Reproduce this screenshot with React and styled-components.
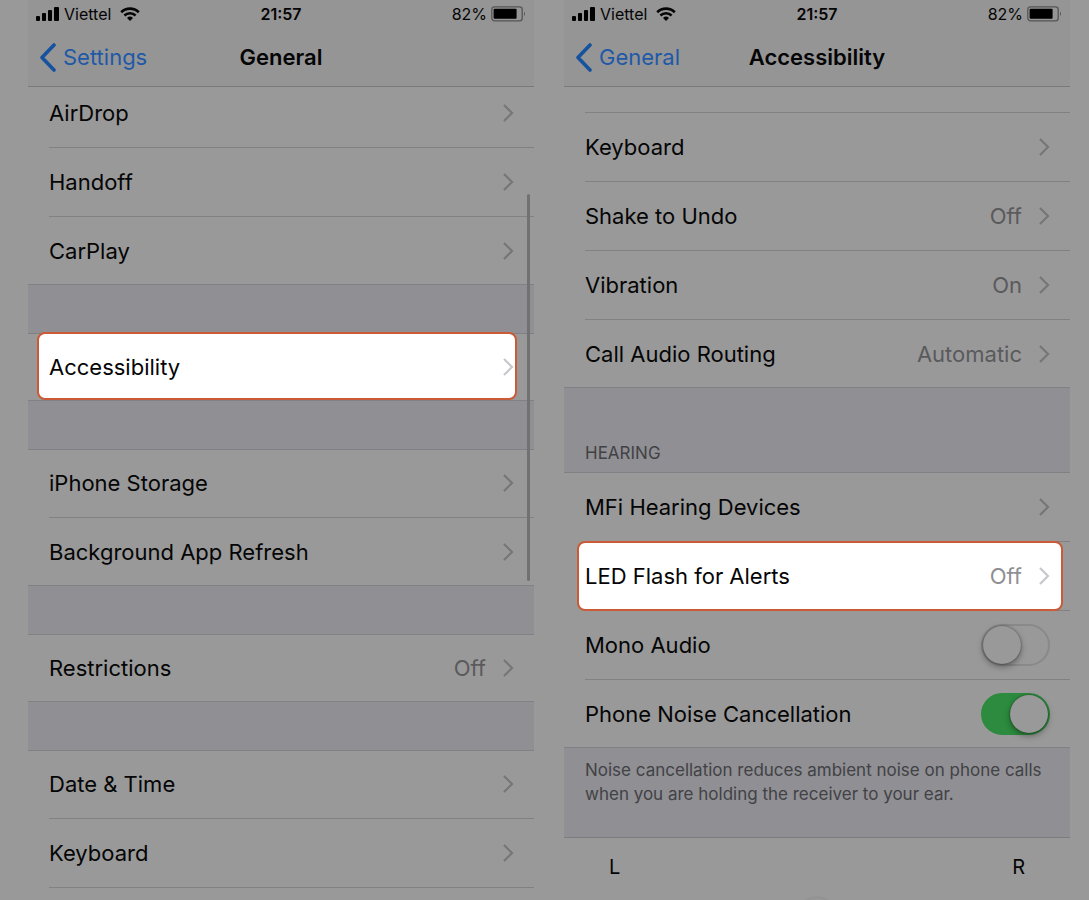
import styled, { createGlobalStyle } from "styled-components";

const App = () => {
  return (
    <>
      <GlobalStyle />
      <Page>
        <GeneralScreen />
        <AccessibilityScreen />
      </Page>
    </>
  );
};

export default App;

const GeneralScreen = () => (
  <Phone>
    <Header title="General" back="Settings" />
    <Content $scrolled>
      <Group>
        <LinkRow label="AirDrop" />
        <LinkRow label="Handoff" />
        <LinkRow label="CarPlay" />
      </Group>
      <Group>
        <LinkRow label="Accessibility" framed="9px 17px" />
      </Group>
      <Group>
        <LinkRow label="iPhone Storage" />
        <LinkRow label="Background App Refresh" />
      </Group>
      <Group>
        <LinkRow label="Restrictions" value="Off" />
      </Group>
      <Group $open>
        <LinkRow label="Date & Time" />
        <LinkRow label="Keyboard" />
      </Group>
    </Content>
    <ScrollBar />
  </Phone>
);

const AccessibilityScreen = () => (
  <Phone>
    <Header title="Accessibility" back="General" />
    <Content>
      <Group>
        <RowEdge />
        <LinkRow label="Keyboard" />
        <LinkRow label="Shake to Undo" value="Off" />
        <LinkRow label="Vibration" value="On" />
        <LinkRow label="Call Audio Routing" value="Automatic" />
      </Group>
      <GroupTitle>HEARING</GroupTitle>
      <Group>
        <LinkRow label="MFi Hearing Devices" />
        <LinkRow label="LED Flash for Alerts" value="Off" framed="13px 7px" />
        <SwitchRow id="mono" label="Mono Audio" />
        <SwitchRow id="noise" label="Phone Noise Cancellation" on />
      </Group>
      <GroupNote>
        Noise cancellation reduces ambient noise on phone calls when you are
        holding the receiver to your ear.
      </GroupNote>
      <Balance>
        <BalanceEnds>
          <span>L</span>
          <span>R</span>
        </BalanceEnds>
        <BalanceSlider type="range" aria-label="Audio balance" />
      </Balance>
    </Content>
  </Phone>
);

const Header = ({ title, back }) => (
  <Top>
    <StatusBar>
      <Carrier>
        <svg width="23" height="14" viewBox="0 0 23 14">
          <rect x="0" y="9" width="4" height="5" rx="1" />
          <rect x="6" y="6" width="4" height="8" rx="1" />
          <rect x="12" y="3" width="4" height="11" rx="1" />
          <rect x="18" y="0" width="5" height="14" rx="1" />
        </svg>
        <span>Viettel</span>
        <WifiIcon width="20" height="14" viewBox="0 0 20 14">
          <path d="M1.2 5.2a12.6 12.6 0 0 1 17.6 0" />
          <path d="M4.4 8.5a8 8 0 0 1 11.2 0" />
          <path d="M7 10.9a4.4 4.4 0 0 1 6 0L10 14z" className="dot" />
        </WifiIcon>
      </Carrier>
      <Clock>21:57</Clock>
      <Power>
        <span>82%</span>
        <svg width="35" height="16" viewBox="0 0 35 16">
          <rect x="0.8" y="0.8" width="30.4" height="14" rx="2.6" fill="none" stroke="#555557" strokeWidth="1.3" />
          <rect x="2.6" y="2.8" width="23" height="10" rx="1" />
          <path d="M33 5.5q2 2.3 0 4.6z" fill="#555557" />
        </svg>
      </Power>
    </StatusBar>
    <NavBar>
      <BackLink href="#back">
        <svg width="17" height="29" viewBox="0 0 17 29">
          <path d="M15 2L3 14.5L15 27" />
        </svg>
        {back}
      </BackLink>
      <Title>{title}</Title>
    </NavBar>
  </Top>
);

const LinkRow = ({ label, value, framed }) => (
  <Row as="a" href="#open" $framed={framed}>
    <Label>{label}</Label>
    {value && <Value>{value}</Value>}
    <Chevron width="12" height="20" viewBox="0 0 12 20">
      <path d="M2 2L10 10L2 18" />
    </Chevron>
  </Row>
);

const SwitchRow = ({ id, label, on }) => (
  <Row>
    <Label as="label" htmlFor={id}>
      {label}
    </Label>
    <Switch id={id} type="checkbox" defaultChecked={on} />
  </Row>
);

const GlobalStyle = createGlobalStyle`
  * {
    box-sizing: border-box;
  }
  body {
    margin: 0;
    background: #999999;
    color: #050505;
    font-family: Inter, "Liberation Sans", sans-serif;
  }
  svg {
    display: block;
    flex-shrink: 0;
  }
`;

const Page = styled.main`
  display: grid;
  grid-template-columns: 1fr 1fr;
  column-gap: 30px;
  height: 100vh;
  padding: 0 19px 0 28px;
  overflow: hidden;
`;

const Phone = styled.section`
  position: relative;
  min-width: 0;
`;

const Top = styled.header`
  position: relative;
  z-index: 2;
  height: 87px;
  background: #959596;
  border-bottom: 1px solid #79797b;
`;

const StatusBar = styled.div`
  display: grid;
  grid-template-columns: 1fr auto 1fr;
  align-items: center;
  height: 28px;
  padding: 0 8px;
  font-size: 16px;
`;

const Carrier = styled.div`
  display: flex;
  align-items: center;
  gap: 5px;
`;

const WifiIcon = styled.svg`
  margin-left: 4px;
  fill: none;
  stroke: #050505;
  stroke-width: 2.6;
  .dot {
    fill: #050505;
    stroke: none;
  }
`;

const Clock = styled.time`
  font-weight: 600;
`;

const Power = styled.div`
  display: flex;
  align-items: center;
  justify-content: flex-end;
  gap: 4px;
`;

const NavBar = styled.nav`
  display: grid;
  grid-template-columns: 1fr auto 1fr;
  align-items: center;
  height: 58px;
  padding: 0 11px;
  font-size: 22px;
`;

const BackLink = styled.a`
  display: flex;
  align-items: center;
  gap: 7px;
  color: #1f59a6;
  text-decoration: none;
  path {
    fill: none;
    stroke: #17529f;
    stroke-width: 3.6;
    stroke-linecap: round;
    stroke-linejoin: round;
  }
`;

const Title = styled.h1`
  margin: 0;
  font-size: 22px;
  font-weight: 600;
`;

const Content = styled.div`
  margin-top: ${(props) => (props.$scrolled ? "-8px" : "0")};
`;

const Row = styled.div`
  position: relative;
  display: flex;
  align-items: center;
  height: 69px;
  padding: 0 20px 2px 21px;
  color: #050505;
  font-size: 22px;
  text-decoration: none;

  > * {
    position: relative;
  }

  /* hairline under the row, starting at the label */
  &::after {
    content: "";
    position: absolute;
    left: 21px;
    right: 0;
    bottom: 0;
    border-bottom: 1px solid #818183;
  }

  ${(props) =>
    props.$framed &&
    `
    &::before {
      content: "";
      position: absolute;
      z-index: 1;
      inset: -1px ${props.$framed.split(" ")[1]} 0 ${props.$framed.split(" ")[0]};
      background: #ffffff;
      border: 2px solid #cb5a36;
      border-radius: 8px;
    }
    > * {
      z-index: 1;
    }
    ${Value} {
      color: #8e8e93;
    }
    ${Chevron} {
      stroke: #c7c7cc;
    }
  `}
`;

const Group = styled.div`
  border-bottom: ${(props) => (props.$open ? "0" : "1px solid #818185")};

  ${Row}:last-child {
    height: ${(props) => (props.$open ? "69px" : "67px")};
    padding-bottom: ${(props) => (props.$open ? "2px" : "0")};
  }
  ${Row}:last-child::after {
    display: ${(props) => (props.$open ? "block" : "none")};
  }

  /* the band between two groups */
  & + & {
    border-top: 48px solid #8f8f94;
    box-shadow: inset 0 1px #818185;
  }
`;

const RowEdge = styled.div`
  height: 26px;
  margin-left: 21px;
  border-bottom: 1px solid #818183;
`;

const Label = styled.span`
  flex: 1;
`;

const Value = styled.span`
  margin-right: 16px;
  color: #5a5a5d;
`;

const Chevron = styled.svg`
  fill: none;
  stroke: #767679;
  stroke-width: 2.2;
`;

const Switch = styled.input`
  appearance: none;
  display: flex;
  width: 69px;
  height: 42px;
  margin: 0;
  padding: 0;
  border: 2px solid #89898a;
  border-radius: 21px;

  &::before {
    content: "";
    width: 38px;
    height: 38px;
    border-radius: 50%;
    background: #999999;
    box-shadow: 0 3px 6px rgba(0, 0, 0, 0.35), 0 0 2px rgba(0, 0, 0, 0.5);
  }
  &:checked {
    justify-content: flex-end;
    background: #2c8b3e;
    border-color: #2c8b3e;
  }
`;

const GroupTitle = styled.h2`
  display: flex;
  align-items: flex-end;
  height: 85px;
  margin: 0;
  padding: 0 21px 9px;
  background: #8f8f94;
  border-bottom: 1px solid #818185;
  color: #424245;
  font-size: 17px;
  font-weight: 400;
  line-height: 20px;
`;

const GroupNote = styled.p`
  height: 90px;
  margin: 0;
  padding: 10px 20px 0 21px;
  background: #8f8f94;
  border-bottom: 1px solid #7b7b80;
  color: #424245;
  font-size: 17px;
  line-height: 24px;
`;

const Balance = styled.div`
  padding: 17px 45px 0;
`;

const BalanceEnds = styled.div`
  display: flex;
  justify-content: space-between;
  font-size: 20px;
  line-height: 24px;
`;

const BalanceSlider = styled.input`
  appearance: none;
  display: block;
  width: 100%;
  height: 38px;
  margin: 19px 0 0;
  background: transparent;

  &::-webkit-slider-thumb {
    appearance: none;
    width: 38px;
    height: 38px;
    border-radius: 50%;
    background: #979797;
    box-shadow: 0 0 3px rgba(0, 0, 0, 0.15);
  }
`;

const ScrollBar = styled.div`
  position: absolute;
  z-index: 3;
  top: 194px;
  right: 4px;
  width: 3px;
  height: 387px;
  border-radius: 2px;
  background: #717173;
`;
